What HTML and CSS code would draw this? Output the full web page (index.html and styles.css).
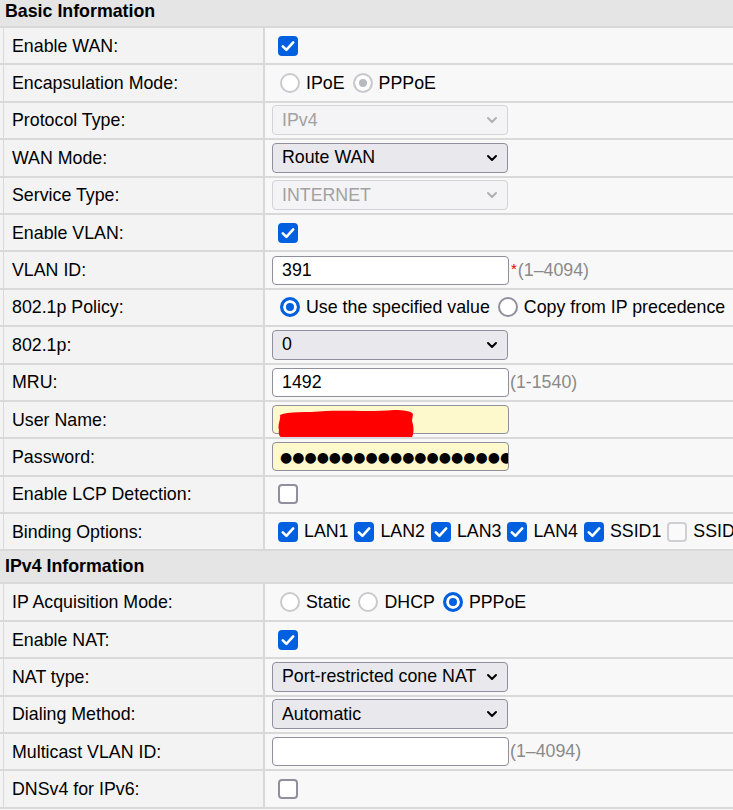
FILE: index.html
```html
<!DOCTYPE html>
<html>
<head>
<meta charset="utf-8">
<link rel="stylesheet" href="styles.css">
</head>
<body>
<div class="page">
  <section class="sec">
    <div class="sec-head first">Basic Information</div>
    <div class="row"><div class="lab">Enable WAN:</div><div class="val"><span class="cb on"><svg viewBox="0 0 20 20"><path d="M4.8 10.3 L8.4 13.9 L15.2 6.4"/></svg></span></div></div>
    <div class="row"><div class="lab">Encapsulation Mode:</div><div class="val"><span class="opts"><span class="opt"><span class="rd dis"></span>IPoE</span><span class="opt"><span class="rd dis on"></span>PPPoE</span></span></div></div>
    <div class="row"><div class="lab">Protocol Type:</div><div class="val"><div class="sel dis"><span>IPv4</span><svg class="chev" viewBox="0 0 10 6"><polyline points="1,1 5,5 9,1"/></svg></div></div></div>
    <div class="row"><div class="lab">WAN Mode:</div><div class="val"><div class="sel"><span>Route WAN</span><svg class="chev" viewBox="0 0 10 6"><polyline points="1,1 5,5 9,1"/></svg></div></div></div>
    <div class="row"><div class="lab">Service Type:</div><div class="val"><div class="sel dis"><span>INTERNET</span><svg class="chev" viewBox="0 0 10 6"><polyline points="1,1 5,5 9,1"/></svg></div></div></div>
    <div class="row"><div class="lab">Enable VLAN:</div><div class="val"><span class="cb on"><svg viewBox="0 0 20 20"><path d="M4.8 10.3 L8.4 13.9 L15.2 6.4"/></svg></span></div></div>
    <div class="row"><div class="lab">VLAN ID:</div><div class="val"><div class="inp">391</div><span class="req">*</span><span class="hint">(1–4094)</span></div></div>
    <div class="row"><div class="lab">802.1p Policy:</div><div class="val"><span class="opts"><span class="opt"><span class="rd on"></span>Use the specified value</span><span class="opt"><span class="rd"></span>Copy from IP precedence</span></span></div></div>
    <div class="row"><div class="lab">802.1p:</div><div class="val"><div class="sel"><span>0</span><svg class="chev" viewBox="0 0 10 6"><polyline points="1,1 5,5 9,1"/></svg></div></div></div>
    <div class="row"><div class="lab">MRU:</div><div class="val"><div class="inp">1492</div><span class="hint">(1-1540)</span></div></div>
    <div class="row"><div class="lab">User Name:</div><div class="val"><div class="inp auto redacted"><svg class="scribble" viewBox="0 0 140 32"><path d="M4 7 C12 3 30 5 50 3 C70 2 95 4 118 2 C128 2 135 3 137 6 L136 13 C138 19 138 25 136 29 C120 31 95 29 70 31 C50 32 25 30 9 31 C4 30 2 27 3 22 C1 17 5 12 4 7 Z"/></svg></div></div></div>
    <div class="row"><div class="lab">Password:</div><div class="val"><div class="inp auto dots">●●●●●●●●●●●●●●●●●●●●●●●</div></div></div>
    <div class="row"><div class="lab">Enable LCP Detection:</div><div class="val"><span class="cb"></span></div></div>
    <div class="row"><div class="lab">Binding Options:</div><div class="val"><span class="opts cbs">
      <span class="opt"><span class="cb on"><svg viewBox="0 0 20 20"><path d="M4.8 10.3 L8.4 13.9 L15.2 6.4"/></svg></span>LAN1</span>
      <span class="opt"><span class="cb on"><svg viewBox="0 0 20 20"><path d="M4.8 10.3 L8.4 13.9 L15.2 6.4"/></svg></span>LAN2</span>
      <span class="opt"><span class="cb on"><svg viewBox="0 0 20 20"><path d="M4.8 10.3 L8.4 13.9 L15.2 6.4"/></svg></span>LAN3</span>
      <span class="opt"><span class="cb on"><svg viewBox="0 0 20 20"><path d="M4.8 10.3 L8.4 13.9 L15.2 6.4"/></svg></span>LAN4</span>
      <span class="opt"><span class="cb on"><svg viewBox="0 0 20 20"><path d="M4.8 10.3 L8.4 13.9 L15.2 6.4"/></svg></span>SSID1</span>
      <span class="opt"><span class="cb dis"></span>SSID2</span>
    </span></div></div>
  </section>
  <section class="sec">
    <div class="sec-head">IPv4 Information</div>
    <div class="row"><div class="lab">IP Acquisition Mode:</div><div class="val"><span class="opts"><span class="opt"><span class="rd dis"></span>Static</span><span class="opt"><span class="rd dis"></span>DHCP</span><span class="opt"><span class="rd on"></span>PPPoE</span></span></div></div>
    <div class="row"><div class="lab">Enable NAT:</div><div class="val"><span class="cb on"><svg viewBox="0 0 20 20"><path d="M4.8 10.3 L8.4 13.9 L15.2 6.4"/></svg></span></div></div>
    <div class="row"><div class="lab">NAT type:</div><div class="val"><div class="sel"><span>Port-restricted cone NAT</span><svg class="chev" viewBox="0 0 10 6"><polyline points="1,1 5,5 9,1"/></svg></div></div></div>
    <div class="row"><div class="lab">Dialing Method:</div><div class="val"><div class="sel"><span>Automatic</span><svg class="chev" viewBox="0 0 10 6"><polyline points="1,1 5,5 9,1"/></svg></div></div></div>
    <div class="row"><div class="lab">Multicast VLAN ID:</div><div class="val"><div class="inp"></div><span class="hint">(1–4094)</span></div></div>
    <div class="row"><div class="lab">DNSv4 for IPv6:</div><div class="val"><span class="cb"></span></div></div>
  </section>
</div>
</body>
</html>
```

FILE: styles.css
```css
html, body {
  margin: 0;
  padding: 0;
  background: #f8f8f8;
  overflow: hidden;
}
.page {
  width: 733px;
  font-family: "Liberation Sans", Arial, sans-serif;
  font-size: 17.8px;
  color: #000;
}
.sec-head {
  height: 31px;
  line-height: 31px;
  padding-left: 5px;
  background: #e5e5e5;
  border-bottom: 2px solid #d9d9d9;
  font-weight: bold;
  font-size: 17.8px;
}
.sec-head.first {
  height: 26px;
  line-height: 23px;
}
.row {
  display: flex;
  height: 35.4px;
  border-bottom: 2px solid #d9d9d9;
  padding-left: 3px;
  background: #f4f4f4;
  white-space: nowrap;
  overflow: hidden;
}
.lab {
  width: 251px;
  flex: none;
  padding-left: 8px;
  padding-top: 1px;
  border-left: 1px solid #d9d9d9;
  border-right: 2px solid #d9d9d9;
  background: #f3f3f3;
  display: flex;
  align-items: center;
}
.val {
  flex: 1;
  background: #f8f8f8;
  padding-left: 7px;
  display: flex;
  align-items: center;
}
.val > .cb {
  margin-left: 6px;
}
.cb {
  width: 20px;
  height: 20px;
  box-sizing: border-box;
  border-radius: 4px;
  border: 2px solid #8f8f9d;
  background: #fff;
  display: inline-block;
  flex: none;
}
.cb.on {
  border: none;
  background: #0060df;
}
.cb.dis {
  border-color: #cfcfd4;
  background: #fafafa;
}
.cb svg {
  display: block;
  width: 20px;
  height: 20px;
  fill: none;
  stroke: #fff;
  stroke-width: 2.6;
  stroke-linecap: round;
  stroke-linejoin: round;
}
.opts {
  display: flex;
  align-items: center;
  margin-left: 8px;
}
.opts.cbs {
  margin-left: 6px;
}
.opt {
  display: flex;
  align-items: center;
  gap: 6px;
  margin-right: 8px;
}
.opts.cbs .opt {
  margin-right: 6px;
}
.rd {
  width: 20px;
  height: 20px;
  box-sizing: border-box;
  border-radius: 50%;
  border: 2px solid #8f8f9d;
  background: #fff;
  flex: none;
}
.rd.dis {
  border-color: #cacace;
}
.rd.on {
  border: 3px solid #0060df;
  background: #0060df;
  box-shadow: inset 0 0 0 3px #fff;
}
.rd.dis.on {
  border: 2px solid #cacace;
  background: #b8b8bf;
  box-shadow: inset 0 0 0 4px #fff;
}
.sel {
  width: 236px;
  height: 30px;
  box-sizing: border-box;
  border: 1px solid #8f8f9d;
  border-radius: 4px;
  background: #e9e9ed;
  padding: 0 10px 0 9px;
  display: flex;
  align-items: center;
  justify-content: space-between;
}
.sel.dis {
  background: #f4f4f6;
  border-color: #d3d3d8;
  color: #a2a2a2;
}
.chev {
  width: 10px;
  height: 6px;
  fill: none;
  stroke: #000;
  stroke-width: 2;
  stroke-linecap: round;
  stroke-linejoin: round;
  overflow: visible;
}
.sel.dis .chev {
  stroke: #b0b0b0;
}
.inp {
  width: 237px;
  height: 29px;
  box-sizing: border-box;
  border: 1px solid #8f8f9d;
  border-radius: 4px;
  background: #fff;
  padding-left: 9px;
  display: flex;
  align-items: center;
  overflow: hidden;
  position: relative;
}
.inp.auto {
  background: #fdf9cd;
}
.dots {
  font-family: "DejaVu Sans", sans-serif;
  font-size: 14px;
  letter-spacing: 0;
  padding-left: 7px;
}
.redacted {
  overflow: visible;
}
.scribble {
  position: absolute;
  left: 3px;
  top: 2px;
  width: 140px;
  height: 32px;
  fill: #ff0000;
}
.req {
  color: #e00000;
  margin-left: 2px;
  align-self: flex-start;
  margin-top: 8px;
  font-size: 15px;
}
.hint {
  color: #8a8a8a;
  margin-left: 1px;
}
```
